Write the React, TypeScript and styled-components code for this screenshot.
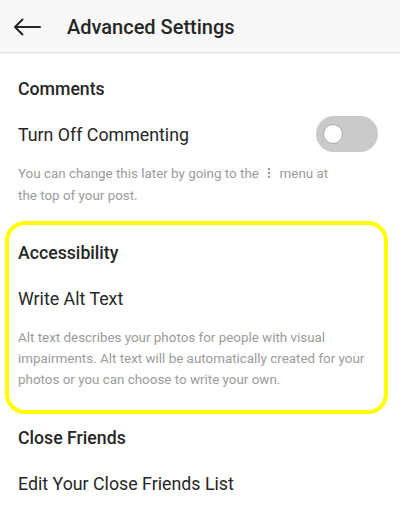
import React from "react";
import styled, { createGlobalStyle } from "styled-components";

const GlobalStyle = createGlobalStyle`
  html, body {
    margin: 0;
    padding: 0;
    background: #ffffff;
  }
  body {
    font-family: Roboto, "Liberation Sans", sans-serif;
    color: #262626;
    -webkit-font-smoothing: antialiased;
  }
`;

type Section = {
  title: string;
  highlighted?: boolean;
  rows: { label: string; toggle?: boolean; description?: React.ReactNode }[];
};

const MenuDots = () => (
  <Dots aria-hidden>
    <svg width="4" height="12" viewBox="0 0 4 12">
      <circle cx="2" cy="2" r="1.2" fill="#9b9b9b" />
      <circle cx="2" cy="6" r="1.2" fill="#9b9b9b" />
      <circle cx="2" cy="10" r="1.2" fill="#9b9b9b" />
    </svg>
  </Dots>
);

const sections: Section[] = [
  {
    title: "Comments",
    rows: [
      {
        label: "Turn Off Commenting",
        toggle: true,
        description: (
          <>
            You can change this later by going to the <MenuDots /> menu at
            <br />
            the top of your post.
          </>
        ),
      },
    ],
  },
  {
    title: "Accessibility",
    highlighted: true,
    rows: [
      {
        label: "Write Alt Text",
        description:
          "Alt text describes your photos for people with visual impairments. Alt text will be automatically created for your photos or you can choose to write your own.",
      },
    ],
  },
  {
    title: "Close Friends",
    rows: [{ label: "Edit Your Close Friends List" }],
  },
];

function App() {
  return (
    <>
      <GlobalStyle />
      <Screen>
        <Header>
          <BackButton aria-label="Back">
            <svg width="28" height="18" viewBox="0 0 28 18" fill="none">
              <path
                d="M27 9H2M9.5 1.5L2 9l7.5 7.5"
                stroke="#262626"
                strokeWidth="2"
                strokeLinecap="round"
                strokeLinejoin="round"
              />
            </svg>
          </BackButton>
          <HeaderTitle>Advanced Settings</HeaderTitle>
        </Header>
        <Content>
          {sections.map((section) => (
            <SectionBox key={section.title} $highlighted={section.highlighted}>
              <SectionTitle>{section.title}</SectionTitle>
              {section.rows.map((row) => (
                <div key={row.label}>
                  <Row>
                    <RowLabel>{row.label}</RowLabel>
                    {row.toggle && (
                      <Toggle>
                        <Knob />
                      </Toggle>
                    )}
                  </Row>
                  {row.description && <Description>{row.description}</Description>}
                </div>
              ))}
            </SectionBox>
          ))}
        </Content>
      </Screen>
    </>
  );
}

export default App;

const Screen = styled.div`
  width: 400px;
  min-height: 531px;
  background: #ffffff;
`;

const Header = styled.div`
  height: 53px;
  display: flex;
  align-items: center;
  background: #f8f8f8;
  border-bottom: 1px solid #e2e2e2;
  box-shadow: 0 1px 2px rgba(0, 0, 0, 0.06);
  box-sizing: border-box;
  padding-top: 1px;
`;

const BackButton = styled.div`
  width: 28px;
  height: 18px;
  margin-left: 13px;
  display: flex;
`;

const HeaderTitle = styled.div`
  margin-left: 26px;
  font-size: 20px;
  font-weight: 500;
  color: #262626;
`;

const Content = styled.div`
  padding-top: 14px;
  display: flex;
  flex-direction: column;
`;

const SectionBox = styled.div<{ $highlighted?: boolean }>`
  box-sizing: border-box;
  ${(p) =>
    p.$highlighted
      ? `
    margin: 15px 12px 2px 5px;
    padding: 6px 0 20px 9px;
    border: 4px solid #ffff00;
    border-radius: 20px;
  `
      : `
    padding-left: 18px;
  `}
`;

const SectionTitle = styled.div`
  height: 44px;
  line-height: 44px;
  font-size: 17.7px;
  font-weight: 500;
  color: #262626;
`;

const Row = styled.div`
  height: 46px;
  display: flex;
  align-items: center;
  justify-content: space-between;
  padding-right: 22px;
`;

const RowLabel = styled.div`
  font-size: 17.8px;
  color: #262626;
`;

const Toggle = styled.div`
  width: 62px;
  height: 36px;
  border-radius: 18px;
  background: #cacaca;
  display: flex;
  align-items: center;
  padding-left: 7px;
  box-sizing: border-box;
`;

const Knob = styled.div`
  width: 20px;
  height: 20px;
  border-radius: 50%;
  background: #ffffff;
  box-sizing: border-box;
  border: 1.5px solid #a9a9a9;
`;

const Description = styled.div`
  margin-top: 6px;
  padding-right: 12px;
  font-size: 13.4px;
  line-height: 21px;
  color: #9b9b9b;
`;

const Dots = styled.span`
  display: inline-block;
  margin: 0 5px;
  vertical-align: -1px;
`;
